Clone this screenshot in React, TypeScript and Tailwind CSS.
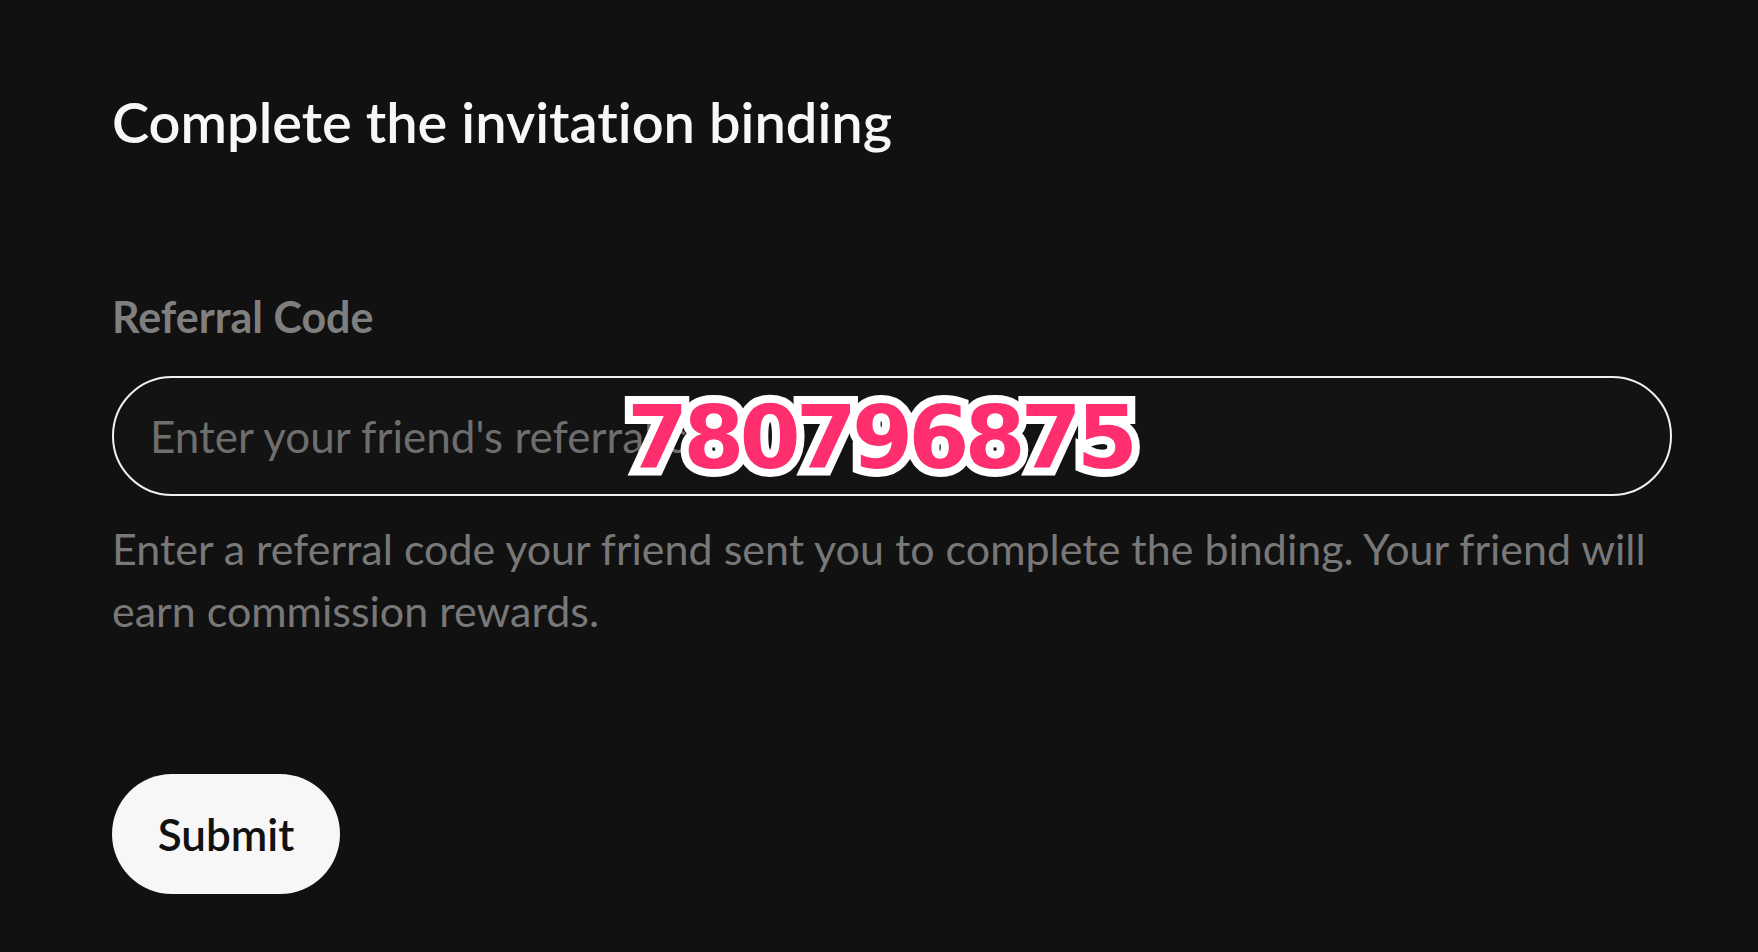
export default function App() {
  return (
    <div className="relative min-h-screen bg-[#111111] font-['Lato',sans-serif] [font-variant-ligatures:none]">
      <div className="flex w-[1672px] flex-col items-start pl-[112px] pt-[88px]">
        <h1 className="text-[56px] leading-[68px] font-semibold text-[#f7f7f7]">
          Complete the invitation binding
        </h1>

        <label className="mt-[135px] text-[43px] leading-[52px] font-bold text-[#7f7f7f]">
          Referral Code
        </label>

        <input
          type="text"
          placeholder="Enter your friend's referral code"
          className="mt-[33px] h-[120px] w-full rounded-full border-2 border-[#f2f2f2] bg-[#131313] px-[36px] text-[44px] text-white outline-none placeholder:text-[#6e6e6e]"
        />

        <p className="mt-[22px] w-full text-[43px] leading-[62px] text-[#787878]">
          Enter a referral code your friend sent you to complete the binding. Your friend will earn commission rewards.
        </p>

        <button className="mt-[132px] flex h-[120px] w-[228px] items-center justify-center rounded-full bg-[#f7f7f7] text-[44px] font-semibold text-[#111111]">
          Submit
        </button>
      </div>

      {/* watermark sticker over the input */}
      <div className="absolute left-[627px] top-[394px] font-['DejaVu_Sans',sans-serif] text-[88px] leading-[88px] font-bold tracking-[-5px] text-[#ff2e6e] [-webkit-text-stroke:16px_#ffffff] [paint-order:stroke_fill]">
        780796875
      </div>
    </div>
  );
}
